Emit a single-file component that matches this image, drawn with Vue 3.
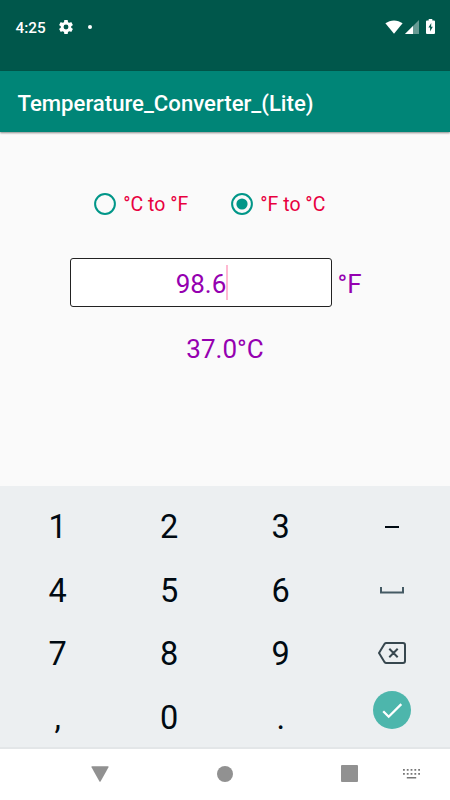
<script setup>
import { ref, computed } from 'vue'

const mode = ref('f2c')
const value = ref('98.6')
const modes = [
  { id: 'c2f', label: '°C to °F' },
  { id: 'f2c', label: '°F to °C' },
]
const keys = ['1', '2', '3', 'minus', '4', '5', '6', 'space', '7', '8', '9', 'delete', ',', '0', '.', 'done']
const icons = ['minus', 'space', 'delete', 'done']

const result = computed(() => {
  const n = parseFloat(value.value) || 0
  return mode.value === 'f2c'
    ? (((n - 32) * 5) / 9).toFixed(1) + '°C'
    : ((n * 9) / 5 + 32).toFixed(1) + '°F'
})

function press(key) {
  if (key === 'delete') value.value = value.value.slice(0, -1)
  else if (key === 'minus') value.value += '-'
  else if (!icons.includes(key)) value.value += key
}
</script>

<template>
  <div class="screen">
    <header class="status">
      <span class="time">4:25</span>
      <svg class="gear" viewBox="2 2 20 20">
        <path d="M19.43 12.98c.04-.32.07-.64.07-.98s-.03-.66-.07-.98l2.11-1.65c.19-.15.24-.42.12-.64l-2-3.46c-.12-.22-.39-.3-.61-.22l-2.49 1c-.52-.4-1.08-.73-1.69-.98l-.38-2.65A.49.49 0 0 0 14 2h-4c-.25 0-.46.18-.49.42l-.38 2.65c-.61.25-1.17.59-1.69.98l-2.49-1c-.23-.09-.49 0-.61.22l-2 3.46c-.13.22-.07.49.12.64l2.11 1.65c-.04.32-.07.65-.07.98s.03.66.07.98l-2.11 1.65c-.19.15-.24.42-.12.64l2 3.46c.12.22.39.3.61.22l2.49-1c.52.4 1.08.73 1.69.98l.38 2.65c.03.24.24.42.49.42h4c.25 0 .46-.18.49-.42l.38-2.65c.61-.25 1.17-.59 1.69-.98l2.49 1c.23.09.49 0 .61-.22l2-3.46c.12-.22.07-.49-.12-.64zM12 15.500a3.500 3.500 0 1 1 0-7 3.500 3.500 0 0 1 0 7z" />
      </svg>
      <i class="dot"></i>
      <svg class="wifi" viewBox="0 0 18 14"><path d="M.4 3.300C5.500-.6 12.500-.6 17.600 3.300L9 13.800z" /></svg>
      <svg class="signal" viewBox="0 0 14 14">
        <path d="M0 14 14 0V14z" opacity=".4" />
        <path d="M0 14 8 6V14z" />
      </svg>
      <svg class="battery" viewBox="0 0 9 15">
        <path d="M2.700 0h3.600v1.500H8q1 0 1 1V14q0 1-1 1H1q-1 0-1-1V2.500q0-1 1-1h1.700z" />
        <path class="bolt" d="M5.300 4 2.400 8.600h1.700V12.500L6.800 7.700H5.100z" />
      </svg>
    </header>

    <div class="appbar"><h1>Temperature_Converter_(Lite)</h1></div>

    <main class="content">
      <div class="modes">
        <button v-for="m in modes" :key="m.id" class="mode" @click="mode = m.id">
          <svg viewBox="0 0 22 22">
            <circle class="ring" cx="11" cy="11" r="9.900" />
            <circle v-if="mode === m.id" class="fill" cx="11" cy="11" r="5.600" />
          </svg>
          <span>{{ m.label }}</span>
        </button>
      </div>
      <div class="entry">
        <div class="field"><span>{{ value }}</span><i class="caret"></i></div>
        <span class="unit">{{ mode === 'f2c' ? '°F' : '°C' }}</span>
      </div>
      <div class="result">{{ result }}</div>
    </main>

    <section class="keyboard">
      <button v-for="k in keys" :key="k" class="key" :class="{ 'key-done': k === 'done' }" @click="press(k)">
        <i v-if="k === 'minus'" class="minus"></i>
        <svg v-else-if="k === 'space'" class="space" viewBox="0 0 24 7"><path d="M1 0V5.500H23V0" /></svg>
        <svg v-else-if="k === 'delete'" class="delete" viewBox="0 0 28 22">
          <path d="M8.200 1H25Q27 1 27 3V19Q27 21 25 21H8.200Q7.200 21 6.600 20.200L1 11 6.600 1.800Q7.200 1 8.200 1zM11.300 6.800 19.700 15.200M19.700 6.800 11.300 15.200" />
        </svg>
        <svg v-else-if="k === 'done'" class="done" viewBox="0 0 38 38">
          <circle cx="19" cy="19" r="19" />
          <path d="M10.200 20.200 15.700 25.700 28.300 13.100" />
        </svg>
        <span v-else>{{ k }}</span>
      </button>
    </section>

    <nav class="navbar">
      <svg class="back" viewBox="0 0 18 16"><path d="M1 .3H17Q18 .3 17.500 1.200L9.700 15.200Q9 16.200 8.300 15.200L.5 1.200Q0 .3 1 .3z" /></svg>
      <i class="home"></i>
      <i class="recent"></i>
      <svg class="ime" viewBox="0 0 17 10">
        <path d="M0 0h1.800v1.800H0zM3.800 0h1.800v1.800H3.800zM7.600 0h1.800v1.800H7.600zM11.400 0h1.800v1.800h-1.800zM15.200 0H17v1.800h-1.800zM0 4h1.800v1.800H0zM3.800 4h1.800v1.800H3.800zM7.600 4h1.800v1.800H7.600zM11.400 4h1.800v1.800h-1.800zM15.200 4H17v1.800h-1.800zM3.800 8h9.400v1.500H3.800z" />
      </svg>
    </nav>
  </div>
</template>

<style>
body {
  margin: 0;
}
</style>

<style scoped>
.screen {
  width: 450px;
  height: 800px;
  display: flex;
  flex-direction: column;
  overflow: hidden;
  background: #fafafa;
  font-family: Roboto, sans-serif;
  font-weight: 400;
}
svg {
  display: block;
  flex: none;
}
button {
  border: 0;
  padding: 0;
  background: none;
  font: inherit;
  color: inherit;
}
.status {
  height: 71px;
  box-sizing: border-box;
  padding: 17px 15.500px 34px 15.500px;
  display: flex;
  align-items: center;
  flex: none;
  background: #00574b;
  color: #fff;
  fill: #fff;
}
.time {
  width: 43px;
  font-size: 15.300px;
  line-height: 20px;
  font-weight: 500;
  padding-top: 1px;
}
.gear {
  width: 14px;
  height: 14px;
}
.dot {
  width: 4px;
  height: 4px;
  margin-left: 15px;
  border-radius: 50%;
  background: #fff;
}
.wifi {
  width: 18px;
  height: 14px;
  margin: 0 1.500px 1px auto;
}
.signal {
  width: 14px;
  height: 14px;
  margin-bottom: 1px;
}
.battery {
  width: 9px;
  height: 15px;
  margin: 0 0 1px 7px;
}
.bolt {
  fill: #00574b;
}
.appbar {
  height: 61px;
  flex: none;
  display: flex;
  align-items: center;
  padding: 2px 17.500px 0;
  box-sizing: border-box;
  background: #008577;
  box-shadow: 0 1px 2px rgba(0, 0, 0, 0.45);
}
h1 {
  margin: 0;
  color: #fff;
  font-size: 22.150px;
  font-weight: 500;
}
.content {
  height: 354px;
  flex: none;
}
.modes {
  display: flex;
  gap: 43px;
  padding: 58px 0 0 94.300px;
}
.mode {
  display: flex;
  align-items: center;
  gap: 7px;
  height: 28px;
  color: #e8003f;
  font-size: 19.500px;
}
.mode span {
  padding-top: 1px;
}
.mode svg {
  width: 22px;
  height: 22px;
}
.ring {
  fill: none;
  stroke: #009688;
  stroke-width: 2;
}
.fill {
  fill: #009688;
}
.entry {
  display: flex;
  align-items: center;
  gap: 6px;
  margin: 40px 0 0 69.500px;
  color: #9500b0;
  font-size: 26px;
}
.field {
  width: 262px;
  height: 49px;
  box-sizing: border-box;
  border: 1px solid #222;
  border-radius: 3px;
  background: #fff;
  display: flex;
  align-items: center;
  justify-content: center;
  padding-left: 1px;
}
.field span,
.unit {
  padding-top: 2px;
}
.caret {
  width: 2px;
  height: 35px;
  margin-right: -2px;
  background: #ffb9d2;
}
.result {
  margin-top: 26px;
  line-height: 32px;
  text-align: center;
  color: #9500b0;
  font-size: 26px;
}
.keyboard {
  height: 263px;
  box-sizing: border-box;
  flex: none;
  display: grid;
  grid-template-columns: repeat(4, 111.500px);
  grid-template-rows: repeat(4, 63.500px);
  padding: 9px 2px 0;
  background: #eceff1;
  border-bottom: 2px solid #e3e6e8;
  color: #000a12;
  font-size: 32.500px;
}
.key {
  display: flex;
  align-items: center;
  justify-content: center;
}
.key span {
  padding-top: 1px;
}
.key-done {
  padding-bottom: 14px;
}
.minus {
  width: 14px;
  height: 2px;
  background: #000a12;
}
.space {
  width: 24px;
  height: 7px;
  fill: none;
  stroke: #455a64;
  stroke-width: 2;
}
.delete {
  width: 28px;
  height: 22px;
  margin-bottom: 1px;
  fill: none;
  stroke: #37474f;
  stroke-width: 2;
}
.done {
  width: 38px;
  height: 38px;
  fill: #4db6ac;
}
.done path {
  fill: none;
  stroke: #fff;
  stroke-width: 2.300;
}
.navbar {
  flex: 1;
  display: flex;
  align-items: center;
  padding: 0 30px 2px 91px;
  background: #fff;
  fill: #919191;
}
.back {
  width: 18px;
  height: 16px;
}
.home {
  width: 16px;
  height: 16px;
  margin-left: 107.500px;
  border-radius: 50%;
  background: #919191;
}
.recent {
  width: 17px;
  height: 17px;
  margin-left: 108px;
  border-radius: 1px;
  background: #919191;
}
.ime {
  width: 17px;
  height: 10px;
  margin-left: auto;
  fill: #777;
}
</style>
